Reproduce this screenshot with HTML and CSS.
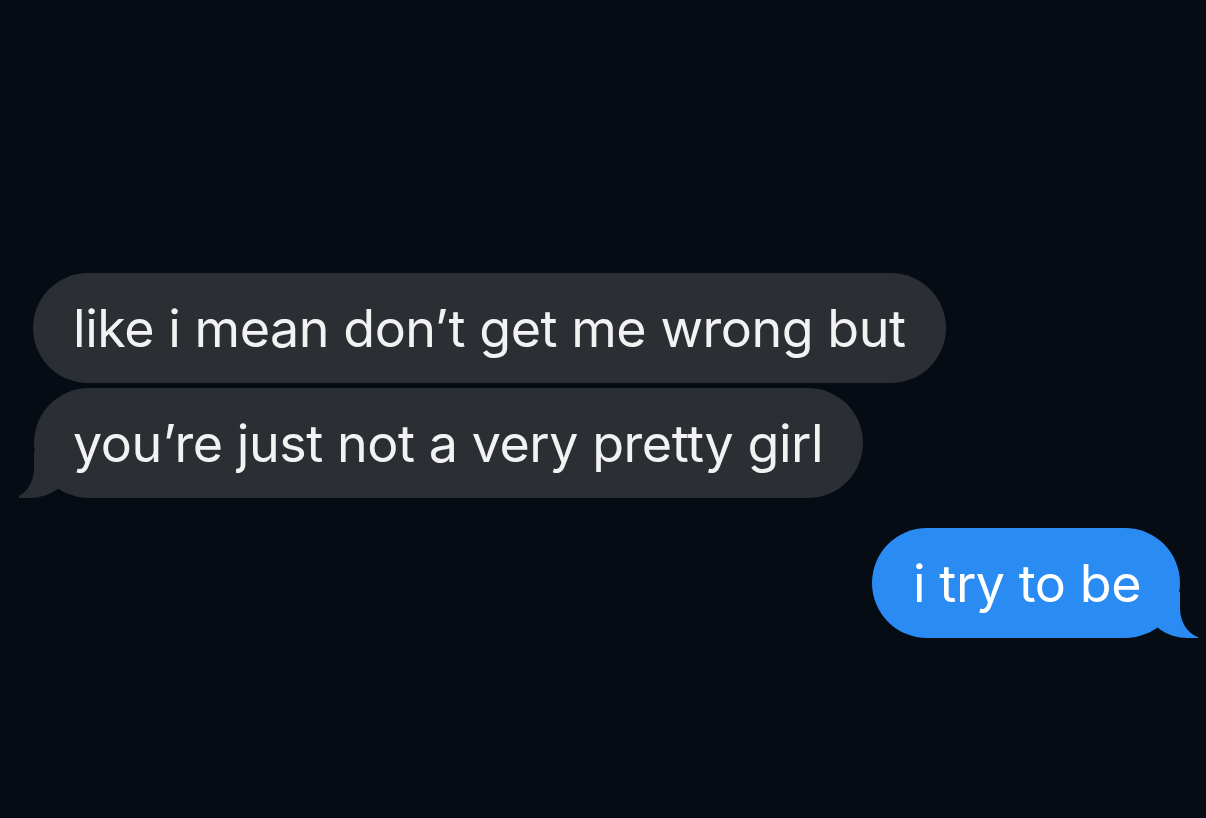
FILE: index.html
```html
<!DOCTYPE html>
<html lang="en">
<head>
  <meta charset="UTF-8" />
  <meta name="viewport" content="width=device-width, initial-scale=1.0"/>
  <title>Messages</title>
  <link rel="stylesheet" href="styles.css">
</head>
<body>

  <div class="thread">
    <div class="msg received">like i mean don’t get me wrong but</div>
    <div class="msg received tail">you’re just not a very pretty girl</div>
    <div class="msg sent tail">i try to be</div>
  </div>

</body>
</html>
```

FILE: styles.css
```css
body {
  margin: 0;
  height: 818px;
  background-color: #050c14;
  font-family: Inter, "Noto Sans", sans-serif;
  overflow: hidden;
}

.thread {
  display: flex;
  flex-direction: column;
  padding: 273px 26px 0 33px;
}

.msg {
  position: relative;
  box-sizing: border-box;
  height: 110px;
  padding: 0 40px;
  border-radius: 55px;
  font-size: 52px;
  line-height: 112px;
  letter-spacing: -0.45px;
  white-space: nowrap;
}

.received {
  align-self: flex-start;
  background: #2b2e33;
  color: #f2f2f2;
  margin-bottom: 5px;
}

.received + .received {
  margin-left: 1px;
  padding-left: 39px;
}

.sent {
  align-self: flex-end;
  background: #2a8bf2;
  color: #ffffff;
  margin-top: 25px;
  padding: 0 39px 0 41px;
}

/* bubble tails: a coloured blob with a background-coloured cut-out over it */
.tail::before,
.tail::after {
  content: "";
  position: absolute;
  bottom: 0;
  height: 46px;
}

.received.tail::before {
  left: -15px;
  width: 50px;
  background: #2b2e33;
  border-bottom-right-radius: 40px 30px;
}

.received.tail::after {
  left: -28px;
  width: 28px;
  background: #050c14;
  border-bottom-right-radius: 24px 30px;
}

.sent.tail::before {
  right: -18px;
  width: 50px;
  background: #2a8bf2;
  border-bottom-left-radius: 40px 30px;
}

.sent.tail::after {
  right: -30px;
  width: 30px;
  background: #050c14;
  border-bottom-left-radius: 24px 30px;
}
```
